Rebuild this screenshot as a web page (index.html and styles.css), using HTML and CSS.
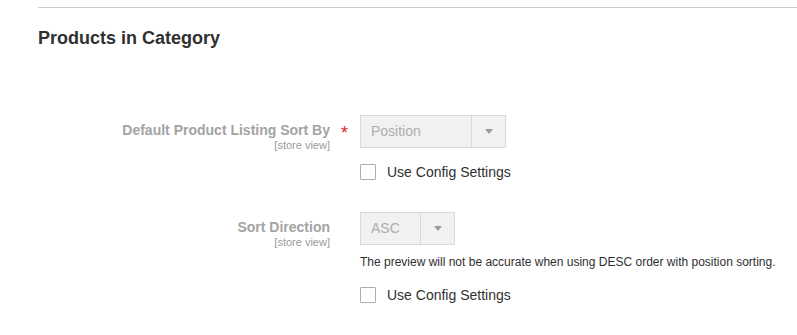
FILE: index.html
```html
<!DOCTYPE html>
<html lang="en">
<head>
    <meta charset="UTF-8">
    <title>Products in Category</title>
    <link rel="stylesheet" href="styles.css">
</head>
<body>
    <div class="page">
        <div class="section">
            <h2 class="section-title">Products in Category</h2>

            <div class="field">
                <div class="field-label">
                    <div class="label-text">
                        <span>Default Product Listing Sort By</span>
                        <span class="scope">[store view]</span>
                    </div>
                    <span class="required">*</span>
                </div>
                <div class="field-control">
                    <div class="select select-wide">
                        <span class="select-value">Position</span>
                        <span class="select-arrow"></span>
                    </div>
                    <label class="checkbox">
                        <span class="box"></span>
                        <span>Use Config Settings</span>
                    </label>
                </div>
            </div>

            <div class="field">
                <div class="field-label">
                    <div class="label-text">
                        <span>Sort Direction</span>
                        <span class="scope">[store view]</span>
                    </div>
                    <span class="required"></span>
                </div>
                <div class="field-control">
                    <div class="select select-narrow">
                        <span class="select-value">ASC</span>
                        <span class="select-arrow"></span>
                    </div>
                    <div class="note">The preview will not be accurate when using DESC order with position sorting.</div>
                    <label class="checkbox checkbox-after-note">
                        <span class="box"></span>
                        <span>Use Config Settings</span>
                    </label>
                </div>
            </div>
        </div>
    </div>
</body>
</html>
```

FILE: styles.css
```css
body {
    margin: 0;
    font-family: "Liberation Sans", Arial, sans-serif;
    background-color: #ffffff;
    color: #303030;
}
.page {
    padding-top: 7px;
}
.section {
    margin-left: 38px;
    border-top: 1px solid #cccccc;
}
.section-title {
    margin: 20px 0 66px;
    font-size: 18px;
    line-height: 21px;
    font-weight: bold;
    color: #303030;
}
.field {
    display: flex;
    margin-bottom: 32px;
}
.field-label {
    width: 322px;
    display: flex;
    justify-content: flex-end;
}
.label-text {
    display: flex;
    flex-direction: column;
    align-items: flex-end;
    padding-top: 8px;
    font-size: 14px;
    line-height: 15px;
    font-weight: bold;
    color: #a3a3a3;
}
.label-text .scope {
    margin-top: 1px;
    font-size: 11px;
    line-height: 13px;
    font-weight: normal;
    color: #9a9a9a;
}
.required {
    width: 19px;
    padding-left: 11px;
    padding-top: 9px;
    font-size: 18px;
    line-height: 18px;
    color: #e22626;
}
.field-control {
    display: flex;
    flex-direction: column;
    align-items: flex-start;
}
.select {
    display: flex;
    height: 33px;
    box-sizing: border-box;
    border: 1px solid #d9d9d9;
    background-color: #f1f1f1;
    font-size: 14px;
    color: #adadad;
}
.select-wide {
    width: 146px;
}
.select-narrow {
    width: 95px;
}
.select-value {
    flex-grow: 1;
    padding-left: 10px;
    line-height: 31px;
}
.select-arrow {
    width: 33px;
    border-left: 1px solid #d9d9d9;
    display: flex;
    align-items: center;
    justify-content: center;
}
.select-arrow::after {
    content: "";
    border-left: 4px solid transparent;
    border-right: 4px solid transparent;
    border-top: 5px solid #9b9b9b;
}
.checkbox {
    display: flex;
    align-items: center;
    gap: 11px;
    margin-top: 16px;
    font-size: 14px;
    line-height: 16px;
    color: #303030;
}
.checkbox .box {
    width: 16px;
    height: 16px;
    box-sizing: border-box;
    border: 1px solid #adadad;
    border-radius: 1px;
    background-color: #ffffff;
}
.checkbox-after-note {
    margin-top: 17px;
}
.note {
    margin-top: 9px;
    font-size: 12px;
    line-height: 16px;
    color: #303030;
}
```
